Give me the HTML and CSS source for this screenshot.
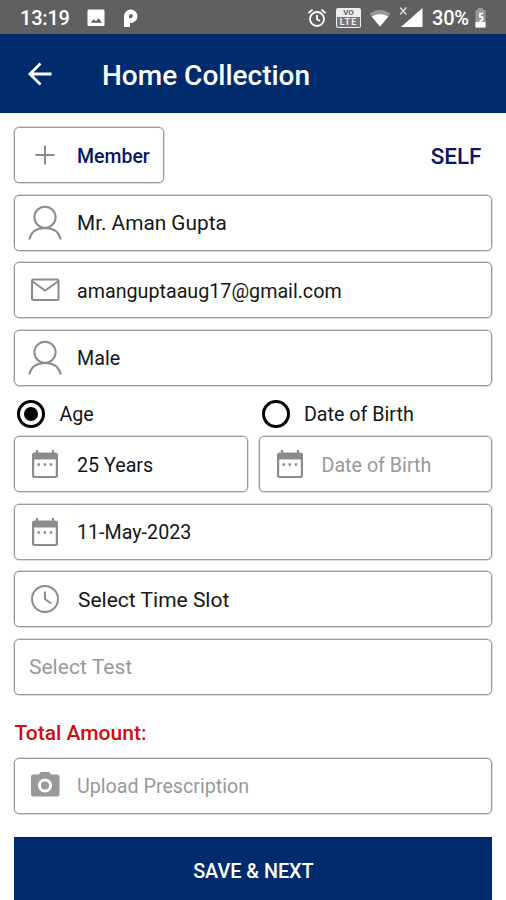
FILE: index.html
```html
<!DOCTYPE html>
<html lang="en">
<head>
<meta charset="utf-8">
<title>Home Collection</title>
<link rel="stylesheet" href="styles.css">
</head>
<body>
<svg class="defs" width="0" height="0" aria-hidden="true">
  <symbol id="person" viewBox="0 0 36 36"><g fill="none" stroke="#8c8c8c" stroke-width="2"><circle cx="18" cy="12.3" r="10.6"/><path d="M2.2 34.5C4 27 10 22.9 18 22.9S32 27 33.800 34.500"/></g></symbol>
  <symbol id="calendar" viewBox="0 0 36 36"><path fill="#8c8c8c" fill-rule="evenodd" d="M9 4h2.200v2.500h13.600V4H27v2.500h1.500Q31 6.500 31 9v20.500Q31 32 28.500 32h-21Q5 32 5 29.500V9Q5 6.500 7.500 6.500H9zM7.200 13.500v15.800q0 .7.7.7h20.200q.7 0 .7-.7V13.500z"/><path fill="#8c8c8c" d="M10.500 17.300h2.400v2.400h-2.400zM16.600 17.300H19v2.400h-2.400zM22.700 17.300h2.400v2.400h-2.400z"/></symbol>
</svg>
<div class="status">
  <span class="time">13:19</span>
  <svg class="s-photo" width="18" height="18" viewBox="0 0 18 18"><rect x=".5" y=".5" width="17" height="16.500" rx="1.500" fill="#fff"/><path d="M3.500 13.800l3.200-3.600 2.200 2 2.800-3 3.200 4.600z" fill="#606060"/></svg>
  <svg class="s-pay" width="16" height="19" viewBox="0 0 16 19"><path d="M2 17V7A5.700 5.700 0 1 1 8 13H6v4z" fill="#fff" stroke="#fff" stroke-width="2"/><path d="M6 9V7a1.900 1.900 0 1 1 2.200 1.900" fill="#606060"/></svg>
  <svg class="s-alarm" width="20" height="20" viewBox="0 0 20 20" fill="none" stroke="#fff" stroke-width="1.800"><circle cx="10" cy="11" r="7"/><path d="M1.500 5L5.600 1.600M18.500 5l-4.100-3.400M10 7v4.300l3 1.800"/></svg>
  <div class="volte"><b>VO</b><i>LTE</i></div>
  <svg class="s-wifi" width="22" height="18" viewBox="0 0 22 18"><path d="M11 17.500L.5 4.800Q11-3 21.500 4.800z" fill="#999"/><path d="M11 17.500L2.600 7.400Q11 3 19.400 7.400z" fill="#fff"/></svg>
  <svg class="s-signal" width="24" height="22" viewBox="0 0 24 22"><path d="M23.500 2v19H2z" fill="#fff"/><path d="M1.200 1.500l6.200 7M7.400 1.500l-6.200 7" stroke="#ddd" stroke-width="1.500"/></svg>
  <span class="percent">30%</span>
  <svg class="s-batt" width="11" height="20" viewBox="0 0 11 20"><path d="M3 0h5v2h2.500v17.500H.5V2H3z" fill="#999"/><path d="M.5 14h10v5.500H.5z" fill="#fff"/><path d="M8 5.500H5V9h2.500v2.500L4.500 14" fill="none" stroke="#fff" stroke-width="1.700"/></svg>
</div>
<header class="bar">
  <svg class="back" width="24" height="24" viewBox="0 0 24 24" fill="none" stroke="#fff" stroke-width="2.800"><path d="M23.500 12H2.500M12.500 1.500L2 12l10.500 10.500"/></svg>
  <h1>Home Collection</h1>
</header>
<main>
  <div class="top">
    <div class="field member"><svg class="ico" viewBox="0 0 36 36"><path d="M18 8.500v19M8.500 18h19" stroke="#8c8c8c" stroke-width="2"/></svg><span class="t-member">Member</span></div>
    <span class="self">SELF</span>
  </div>
  <div class="field"><svg class="ico"><use href="#person"/></svg><span class="t-name">Mr. Aman Gupta</span></div>
  <div class="field"><svg class="ico" viewBox="0 0 36 36" fill="none" stroke="#8c8c8c" stroke-width="2"><rect x="5" y="7.500" width="26.500" height="20.500" rx="1.500"/><path d="M5.500 9.500L18 18.500l13-9"/></svg><span class="t-mail">amanguptaaug17@gmail.com</span></div>
  <div class="field"><svg class="ico"><use href="#person"/></svg><span class="t-male">Male</span></div>
  <div class="split radios">
    <div class="option"><span class="radio on"></span><span class="t-age">Age</span></div>
    <div class="option"><span class="radio"></span><span class="t-dob">Date of Birth</span></div>
  </div>
  <div class="split">
    <div class="field"><svg class="ico"><use href="#calendar"/></svg><span class="t-years">25 Years</span></div>
    <div class="field hint"><svg class="ico"><use href="#calendar"/></svg><span class="t-dob">Date of Birth</span></div>
  </div>
  <div class="field"><svg class="ico"><use href="#calendar"/></svg><span class="t-date">11-May-2023</span></div>
  <div class="field"><svg class="ico" viewBox="0 0 36 36" fill="none" stroke="#8c8c8c" stroke-width="2"><circle cx="18" cy="18" r="13"/><path d="M18 10.500V18l6.200 4.500"/></svg><span class="t-slot">Select Time Slot</span></div>
  <div class="field hint plain"><span class="t-test">Select Test</span></div>
  <div class="total"><span>Total Amount:</span></div>
  <div class="field hint"><svg class="ico" viewBox="0 0 36 36"><path fill="#999" d="M6 6.500h5.500L14 4h8l2.500 2.500H30Q32.500 6.500 32.500 9v17q0 2.500-2.500 2.500H6.500Q4 28.500 4 26V9Q4 6.500 6 6.500z"/><circle cx="18" cy="17.500" r="5.600" fill="#999" stroke="#fff" stroke-width="3"/></svg><span class="t-upload">Upload Prescription</span></div>
  <button class="save"><span>SAVE &amp; NEXT</span></button>
</main>
</body>
</html>
```
FILE: styles.css
```css
* { box-sizing: border-box; }
body { margin: 0; width: 506px; height: 900px; overflow: hidden; background: #fff; font: 19.7px/24px Roboto, "Liberation Sans", sans-serif; color: #161616; }
.defs { display: block; }
.status { height: 34px; background: #606060; display: flex; align-items: center; padding: 2px 20px 0 20px; color: #fff; font-size: 20px; font-weight: 500; }
.status svg { flex: none; }
.time { width: 67px; letter-spacing: -0.2px; }
.s-pay { margin-left: 18px; }
.s-alarm { margin-left: auto; }
.volte { width: 25px; height: 20px; margin-left: 9px; background: #eee; border-radius: 2px; padding: 1px; text-align: center; font-size: 8px; line-height: 8px; color: #606060; }
.volte b, .volte i { display: block; font-style: normal; font-weight: 700; }
.volte i { height: 10px; line-height: 10px; font-size: 9px; background: #777; color: #eee; letter-spacing: 1px; }
.s-wifi { margin-left: 8px; }
.s-signal { margin: -3px 0 0 8px; }
.percent { width: 36px; margin-left: 9px; margin-right: 7px; letter-spacing: -0.2px; }
.bar { height: 79px; background: #002b6c; display: flex; align-items: center; padding-left: 28px; color: #fff; }
h1 { margin: 4px 0 0 50px; font-size: 28px; line-height: 32px; font-weight: 500; }
.back { margin-top: 0; }
main { padding: 14px 13.6px 0 14.4px; display: flex; flex-direction: column; gap: 11.5px; }
.field { height: 56px; border: 1px solid #999; border-radius: 5px; display: flex; align-items: center; padding-left: 12px; box-shadow: 0 0 0 0.5px #bbb; white-space: nowrap; }
.field span { padding-top: 3px; }
.ico { width: 36px; height: 36px; flex: none; margin-right: 13.6px; }
.top { display: flex; justify-content: space-between; align-items: center; padding-right: 11px; color: #0a1464; font-weight: 500; }
.member { width: 150px; }
.t-member { font-size: 19.5px; }
.self { font-size: 22.4px; padding-top: 1px; }
.field .t-name { font-size: 20.8px; padding-top: 1px; }
.field .t-slot { font-size: 21px; padding: 2px 0 0 1px; }
.field .t-test { font-size: 21.1px; padding-top: 1px; }
.split { display: grid; grid-template-columns: 233.5px 233.5px; gap: 11px; }
.radios { height: 28px; margin-bottom: -0.5px; }
.option { display: flex; align-items: center; padding-left: 3px; }
.option span { flex: none; position: relative; top: 3px; }
.option .t-age, .option .t-dob { padding-top: 2px; }
.radio { width: 28px; height: 28px; border: 3px solid #000; border-radius: 50%; margin-right: 14px; display: grid; place-items: center; }
.radio.on::after { content: ""; width: 14px; height: 14px; border-radius: 50%; background: #000; }
.hint { color: #999; }
.plain { padding-left: 13.5px; }
.total { height: 40px; display: flex; align-items: flex-end; padding-bottom: 1px; color: #d00c10; font-weight: 500; font-size: 21px; }
.save { height: 70px; margin-top: 11.5px; border: 0; border-radius: 0; background: #002b6c; color: #fff; font: 500 19.8px/24px Roboto, "Liberation Sans", sans-serif; }
```
